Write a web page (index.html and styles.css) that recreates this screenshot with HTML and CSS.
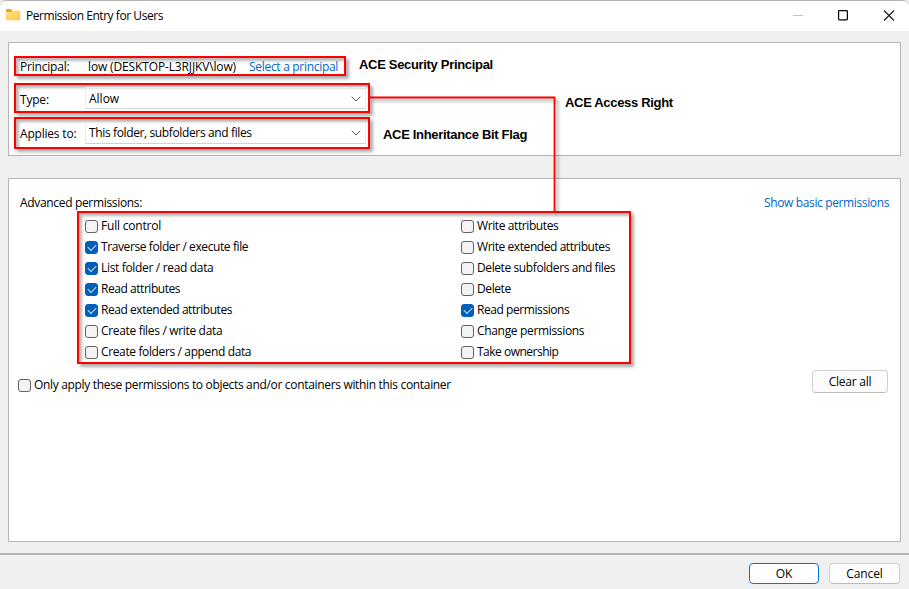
FILE: index.html
```html
<!DOCTYPE html>
<html lang="en">
<head>
<meta charset="utf-8">
<title>Permission Entry for Users</title>
<link rel="stylesheet" href="styles.css">
</head>
<body>
<div class="window">
  <header class="titlebar">
    <svg class="folder" width="15" height="12" viewBox="0 0 15 12"><path d="M0 1.2Q0 0 1 0H4.6L6.4 1.6V4H0Z" fill="#eaa41a"/><path d="M0 3H5L6.6 1.5H13.5Q14.2 1.5 14.2 2.3V10.3Q14.2 11.2 13.3 11.2H.9Q0 11.2 0 10.3Z" fill="url(#fold)"/><defs><linearGradient id="fold" x1="0" y1="0" x2="1" y2="1"><stop offset="0" stop-color="#ffe08a"/><stop offset="1" stop-color="#fcca45"/></linearGradient></defs></svg>
    <h1 class="title">Permission Entry for Users</h1>
    <svg class="caption-icons" width="106" height="12" viewBox="0 0 106 12" fill="none"><path d="M0 5.5H10" stroke="#c4c4c4"/><rect x="45.6" y=".6" width="8.8" height="9.3" rx=".8" stroke="#000" stroke-width="1.2"/><path d="M91 .5L101 10.5M101 .5L91 10.5" stroke="#111" stroke-width="1.1"/></svg>
  </header>

  <section class="panel summary">
    <div class="line">
      <div class="frame principal">
        <span class="label t20">Principal:</span>
        <span class="account t14">low (DESKTOP-L3RJJKV\low)</span>
        <a class="link t30">Select a principal</a>
      </div>
      <strong class="note note-principal">ACE Security Principal</strong>
    </div>
    <div class="line line-type">
      <div class="frame field">
        <span class="label t20">Type:</span>
        <div class="combo combo-type"><span class="t0">Allow</span><svg width="10" height="6" viewBox="0 0 10 6"><path d="M.7 .7L5 5L9.3 .7" fill="none" stroke="#555"/></svg></div>
      </div>
      <strong class="note note-right">ACE Access Right</strong>
    </div>
    <div class="line line-applies">
      <div class="frame field field-applies">
        <span class="label t20">Applies to:</span>
        <div class="combo"><span class="t37">This folder, subfolders and files</span><svg width="10" height="6" viewBox="0 0 10 6"><path d="M.7 .7L5 5L9.3 .7" fill="none" stroke="#555"/></svg></div>
      </div>
      <strong class="note note-flag">ACE Inheritance Bit Flag</strong>
    </div>
  </section>

  <section class="panel advanced">
    <div class="heading"><span class="t33">Advanced permissions:</span><a class="link t37">Show basic permissions</a></div>
    <div class="frame permissions">
      <div class="column">
        <div class="perm"><i class="box"></i><span class="t20">Full control</span></div>
        <div class="perm"><i class="box on"></i><span class="t40">Traverse folder / execute file</span></div>
        <div class="perm"><i class="box on"></i><span class="t33">List folder / read data</span></div>
        <div class="perm"><i class="box on"></i><span class="t45">Read attributes</span></div>
        <div class="perm"><i class="box on"></i><span class="t45">Read extended attributes</span></div>
        <div class="perm"><i class="box"></i><span class="t33">Create files / write data</span></div>
        <div class="perm"><i class="box"></i><span class="t37">Create folders / append data</span></div>
      </div>
      <div class="column">
        <div class="perm"><i class="box"></i><span class="t40">Write attributes</span></div>
        <div class="perm"><i class="box"></i><span class="t43">Write extended attributes</span></div>
        <div class="perm"><i class="box"></i><span class="t40">Delete subfolders and files</span></div>
        <div class="perm"><i class="box"></i><span class="t40">Delete</span></div>
        <div class="perm"><i class="box on"></i><span class="t43">Read permissions</span></div>
        <div class="perm"><i class="box"></i><span class="t33">Change permissions</span></div>
        <div class="perm"><i class="box"></i><span class="t50">Take ownership</span></div>
      </div>
    </div>
    <div class="only-row">
      <div class="perm"><i class="box"></i><span class="only-label">Only apply these permissions to objects and/or containers within this container</span></div>
      <button class="button clear">Clear all</button>
    </div>
  </section>

  <footer class="footer">
    <button class="button ok">OK</button>
    <button class="button cancel">Cancel</button>
  </footer>

  <svg class="connector" width="195" height="125" viewBox="0 0 195 125"><path d="M0 1.5H184.5V115" fill="none" stroke="#f00" stroke-width="1.8"/></svg>
</div>
</body>
</html>
```
FILE: styles.css
```css
* { box-sizing: border-box; }
body {
  margin: 0;
  font: 12px/16px "Open Sans", sans-serif;
  color: #000;
  background: #f0f0f0;
}
.window {
  position: relative;
  width: 909px;
  height: 589px;
  display: flex;
  flex-direction: column;
  overflow: hidden;
  white-space: nowrap;
}
.titlebar {
  height: 31px;
  flex: none;
  display: flex;
  align-items: center;
  padding: 0 14px 0 6px;
  border-top: 1px solid #b4b4b4;
  border-radius: 6px 6px 0 0;
  background: #fff;
}
.folder { margin-top: -2px; }
.title { margin: 0 auto 0 5px; font-size: 12px; font-weight: 400; letter-spacing: -0.45px; }
.caption-icons { display: block; margin-right: -4px; margin-top: -1px; }

.panel { flex: none; margin: 0 8px; border: 1px solid #b4b4b4; background: #fff; }
.summary { width: 893px; height: 114px; margin-top: 11px; padding: 13px 0 0 5px; }
.advanced { width: 893px; height: 364px; margin-top: 22px; padding-top: 16px; }

.line { display: flex; align-items: flex-start; }
.line-type { margin-top: 7px; }
.line-applies { margin-top: 4px; }
.frame {
  border: 2px solid #f00;
  box-shadow: 3px 3px 3px rgba(0, 0, 0, .32), inset 3px 3px 3px rgba(0, 0, 0, .28);
}
.principal { width: 332px; height: 20px; display: flex; align-items: center; padding: 2px 0 0 4px; }
.label { width: 68px; }
.account { width: 161px; }
.link { color: #0066cc; }
.field { width: 356px; height: 30px; display: flex; align-items: center; padding-left: 4px; }
.field-applies { height: 32px; }
.field .label { width: 65px; padding-top: 3px; }
.field-applies .label { padding-top: 1px; }
.combo {
  width: 281px;
  height: 22px;
  display: flex;
  align-items: center;
  justify-content: space-between;
  padding: 0 4px 0 3px;
  border: 1px solid #ececec;
  border-bottom-color: #d2d2d2;
}
.combo-type span { padding-top: 2px; }
.combo-type svg { margin-top: 2px; }
.note { font: bold 13px/16px "Liberation Sans", sans-serif; letter-spacing: -0.32px; }
.note-principal { margin: 1px 0 0 13px; }
.note-right { margin: 12px 0 0 195px; }
.note-flag { margin: 10px 0 0 13px; }

.heading { display: flex; justify-content: space-between; padding: 0 11px; }
.permissions { display: flex; width: 554px; height: 153px; margin-left: 68px; padding: 3px 0 0 6px; }
.column { flex: none; width: 376px; }
.column + .column { width: 160px; }
.perm { display: flex; align-items: center; gap: 3px; height: 21px; }
.perm span { margin-top: -1px; }
.box { width: 13px; height: 13px; border: 1px solid #626262; border-radius: 3px; background: #f3f3f3; }
.on { display: flex; justify-content: center; align-items: center; border-color: #005fb8; background: #005fb8; }
.on::after {
  content: "";
  width: 7px;
  height: 4px;
  margin-top: -2px;
  border: solid #d5e6f6;
  border-width: 0 0 1px 1px;
  transform: rotate(-45deg);
}
.only-row { display: flex; justify-content: space-between; padding: 6px 12px 0 9px; }
.only-row .perm { margin-top: 5px; }
.only-label { letter-spacing: -0.325px; }
.button {
  padding: 1px 0 0;
  font: inherit;
  letter-spacing: -0.24px;
  color: #000;
  border: 1px solid #d0d0d0;
  border-bottom-color: #bcbcbc;
  border-radius: 4px;
  background: #fdfdfd;
}
.clear { width: 76px; height: 23px; }
.footer {
  flex: 1;
  display: flex;
  justify-content: flex-end;
  gap: 10px;
  margin-top: 11px;
  padding: 8px 9px 0 0;
  border-top: 2px solid #b4b4b4;
}
.ok { width: 70px; height: 21px; letter-spacing: 0; border-color: #0078d4; }
.cancel { width: 71px; height: 21px; letter-spacing: -0.1px; }
.connector { position: absolute; left: 370px; top: 96px; filter: drop-shadow(3px 3px 1.5px rgba(0, 0, 0, .32)); }

.t0 { letter-spacing: 0; }
.t14 { letter-spacing: -0.14px; }
.t20 { letter-spacing: -0.2px; }
.t30 { letter-spacing: -0.3px; }
.t33 { letter-spacing: -0.33px; }
.t37 { letter-spacing: -0.37px; }
.t40 { letter-spacing: -0.4px; }
.t43 { letter-spacing: -0.43px; }
.t45 { letter-spacing: -0.45px; }
.t50 { letter-spacing: -0.5px; }
```
